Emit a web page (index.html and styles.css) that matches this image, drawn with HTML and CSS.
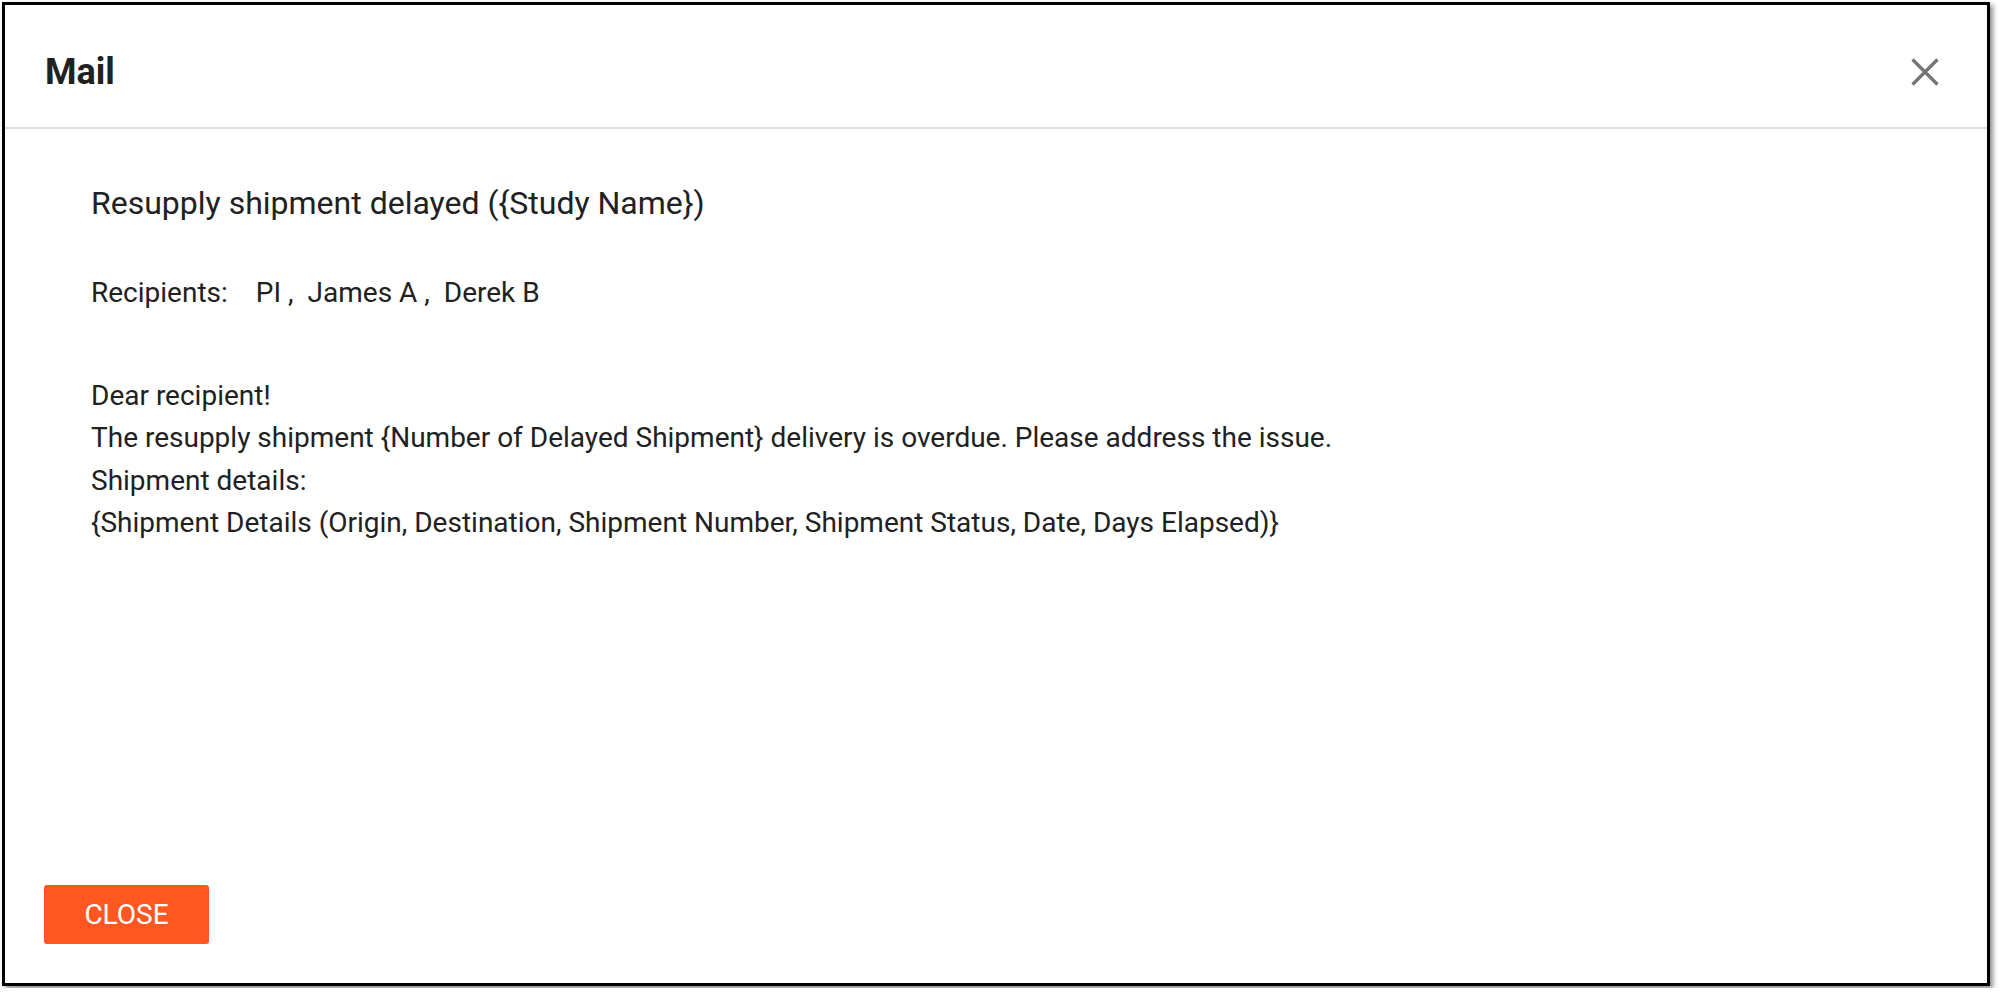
FILE: index.html
```html
<!DOCTYPE html>
<html lang="en">
<head>
    <meta charset="UTF-8">
    <title>Mail</title>
    <link rel="stylesheet" href="styles.css">
</head>
<body>
    <div class="dialog">
        <div class="dialog-header">
            <h2 class="dialog-title">Mail</h2>
            <button class="icon-btn" aria-label="close">
                <svg width="28" height="28" viewBox="0 0 28 28">
                    <path d="M1.5 1.5 L26.5 26.5 M26.5 1.5 L1.5 26.5" stroke="#757575" stroke-width="3.2" fill="none"/>
                </svg>
            </button>
        </div>

        <div class="dialog-content">
            <div class="subject">Resupply shipment delayed ({Study Name})</div>

            <div class="recipients">
                <span class="label">Recipients:</span>
                <span class="recipient">PI ,</span>
                <span class="recipient">James A ,</span>
                <span class="recipient">Derek B</span>
            </div>

            <div class="message">
                <div>Dear recipient!</div>
                <div>The resupply shipment {Number of Delayed Shipment} delivery is overdue. Please address the issue.</div>
                <div>Shipment details:</div>
                <div>{Shipment Details (Origin, Destination, Shipment Number, Shipment Status, Date, Days Elapsed)}</div>
            </div>
        </div>

        <div class="dialog-actions">
            <button class="btn">CLOSE</button>
        </div>
    </div>
</body>
</html>
```

FILE: styles.css
```css
html, body {
    margin: 0;
    padding: 0;
    background: #fff;
}
body {
    font-family: Roboto, "Liberation Sans", sans-serif;
    color: #212121;
}
.dialog {
    box-sizing: border-box;
    width: 1988px;
    height: 984px;
    margin: 2px;
    border: 3px solid #000;
    background: #fff;
    box-shadow: 3px 3px 5px rgba(0,0,0,0.45);
    display: flex;
    flex-direction: column;
}
.dialog-header {
    box-sizing: border-box;
    height: 124px;
    border-bottom: 2px solid #dedede;
    display: flex;
    align-items: center;
    justify-content: space-between;
    padding: 11px 48px 0 40px;
}
.dialog-title {
    margin: 0;
    font-size: 36px;
    font-weight: 700;
    color: #212121;
}
.icon-btn {
    background: none;
    border: none;
    padding: 0;
    width: 28px;
    height: 28px;
    display: flex;
}
.dialog-content {
    flex: 1;
    padding: 54px 86px 0 86px;
    font-size: 28px;
    line-height: 42.5px;
}
.subject {
    font-size: 32px;
    line-height: 40px;
    margin-bottom: 49px;
}
.recipients {
    display: flex;
    margin-bottom: 60px;
}
.recipients .label {
    margin-right: 28px;
}
.recipients .recipient {
    margin-right: 14px;
}
.dialog-actions {
    padding: 0 0 39px 39px;
}
.btn {
    background: #ff5722;
    color: #fff;
    border: none;
    border-radius: 3px;
    width: 165px;
    height: 59px;
    font-family: Roboto, "Liberation Sans", sans-serif;
    font-size: 28px;
    font-weight: 400;
    padding: 0;
}
```
